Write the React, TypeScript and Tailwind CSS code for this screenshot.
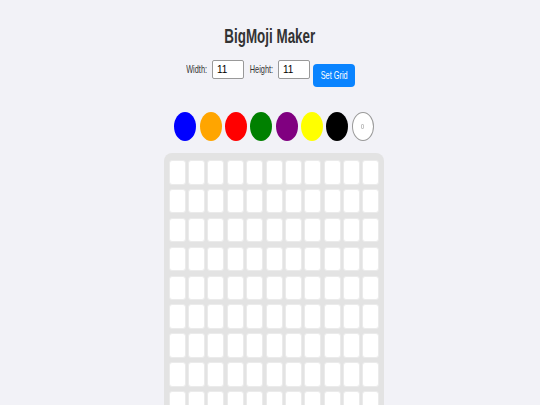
import * as React from "react";

const COLORS = ["#0000ff", "#ffa500", "#ff0000", "#008000", "#800080", "#ffff00", "#000000"];

export default function App(): React.JSX.Element {
  const [width, setWidth] = React.useState("11");
  const [height, setHeight] = React.useState("11");
  const [size, setSize] = React.useState({ w: 11, h: 11 });
  const [color, setColor] = React.useState("#0000ff");
  const [cells, setCells] = React.useState<Record<string, string>>({});

  const font = { fontFamily: '"Liberation Sans", Arial, sans-serif' };

  return (
    <div className="min-h-screen bg-[#f2f2f7] flex flex-col items-center pt-[24px]" style={font}>
      <h1 className="h-[24px] leading-[24px] text-[20px] font-bold text-[#333]">
        <span className="inline-block scale-x-[0.67]">BigMoji Maker</span>
      </h1>

      {/* Size controls */}
      <div className="mt-[12px] flex items-start pl-[2px]">
        <label className="w-[20px] h-[19px] leading-[19px] text-[11px] text-[#333] mr-[5px] flex justify-center whitespace-nowrap">
          <span className="inline-block scale-x-[0.67]">Width:</span>
        </label>
        <input
          value={width}
          onChange={(e) => setWidth(e.target.value)}
          className="w-[32px] h-[19px] rounded-[2px] border border-[#999] bg-white px-[4px] text-[10px] text-black"
        />
        <label className="w-[23px] h-[19px] leading-[19px] text-[11px] text-[#333] ml-[6px] mr-[5px] flex justify-center whitespace-nowrap">
          <span className="inline-block scale-x-[0.67]">Height:</span>
        </label>
        <input
          value={height}
          onChange={(e) => setHeight(e.target.value)}
          className="w-[32px] h-[19px] rounded-[2px] border border-[#999] bg-white px-[4px] text-[10px] text-black"
        />
        <button
          type="button"
          onClick={() => setSize({ w: parseInt(width) || 11, h: parseInt(height) || 11 })}
          className="ml-[3px] mt-[4px] w-[42px] h-[23px] rounded-[4px] bg-[#0a84ff] text-white text-[11px] flex items-center justify-center whitespace-nowrap"
        >
          <span className="inline-block scale-x-[0.67]">Set Grid</span>
        </button>
      </div>

      {/* Palette */}
      <div className="mt-[25px] flex gap-[3.3px] pl-[8px]">
        {COLORS.map((c) => (
          <button
            key={c}
            type="button"
            onClick={() => setColor(c)}
            className="w-[22px] h-[29px] rounded-[50%]"
            style={{ backgroundColor: c }}
          />
        ))}
        <button
          type="button"
          onClick={() => setColor("#ffffff")}
          className="w-[22px] h-[29px] rounded-[50%] bg-white border-[1.5px] border-[#9a9a9a] flex items-center justify-center"
        >
          <span className="block w-[3px] h-[5px] rounded-[1px] border border-[#c4c4c4]" />
        </button>
      </div>

      {/* Grid */}
      <div className="mt-[12px] ml-[8px] rounded-[8px] bg-[#e3e3e3] pl-[4.5px] pr-[4.5px] pt-[7px] pb-[7px]">
        <div
          className="grid gap-x-[2.4px] gap-y-[4.4px]"
          style={{ gridTemplateColumns: `repeat(${size.w}, 17px)` }}
        >
          {Array.from({ length: size.w * size.h }).map((_, i) => (
            <div
              key={i}
              onClick={() => setCells((prev) => ({ ...prev, [i]: color }))}
              className="h-[24.5px] rounded-[3px] border border-[#ebebeb]"
              style={{ backgroundColor: cells[i] ?? "#ffffff" }}
            />
          ))}
        </div>
      </div>
    </div>
  );
}
